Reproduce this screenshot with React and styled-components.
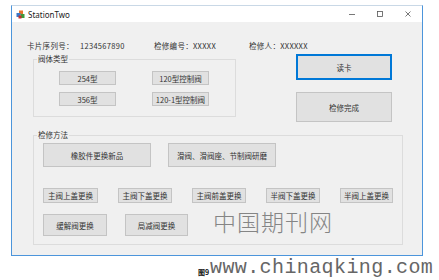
import styled, { createGlobalStyle } from "styled-components";

const Global = createGlobalStyle`
  html, body {
    margin: 0;
    padding: 0;
    background: #ffffff;
  }
  body {
    font-family: "Noto Sans CJK SC", "Noto Sans", sans-serif;
    width: 439px;
    height: 280px;
    position: relative;
    overflow: hidden;
  }
`;

const Window = styled.div`
  position: relative;
  margin: 5px 0 0 11px;
  width: 412px;
  height: 251px;
  box-sizing: border-box;
  border: 1px solid #4c95db;
  border-top-color: #c9d8e6;
  background: #f0f0f0;
  display: flex;
  flex-direction: column;
`;

const TitleBar = styled.div`
  height: 16px;
  background: #ffffff;
  display: flex;
  align-items: center;
  padding-left: 4px;
  font-family: "Noto Sans", "Open Sans", sans-serif;
  font-size: 8px;
  color: #222;
`;

const TitleText = styled.span`
  margin-left: 3px;
  flex: 1;
`;

const Controls = styled.div`
  display: flex;
  align-items: center;
  height: 100%;
`;

const Ctrl = styled.div`
  width: 28px;
  height: 100%;
  display: flex;
  align-items: center;
  justify-content: center;
`;

const Client = styled.div`
  flex: 1;
  display: flex;
  flex-direction: column;
  padding-left: 21px;
  font-size: 7.5px;
  color: #333;
`;

const InfoRow = styled.div`
  display: flex;
  align-items: center;
  height: 14px;
  margin: 16px 0 0 -6px;
  white-space: nowrap;
`;

const Info = styled.span`
  width: ${(p) => p.w}px;
  flex: none;
  letter-spacing: 0.3px;
`;

const Middle = styled.div`
  display: flex;
  margin-top: 2px;
`;

const Group = styled.fieldset`
  box-sizing: border-box;
  margin: 0;
  min-width: 0;
  width: ${(p) => p.w}px;
  height: ${(p) => p.h}px;
  border: 1px solid #dcdcdc;
  padding: 0;
  display: flex;
  flex-direction: column;
`;

const Legend = styled.legend`
  font-size: 7.5px;
  line-height: 10px;
  padding: 0 1px;
  margin-left: 3px;
  color: #333;
`;

const TypeGrid = styled.div`
  display: grid;
  grid-template-columns: 57px 57px;
  column-gap: 36px;
  row-gap: 7px;
  padding: 7px 0 0 25px;
`;

const Btn = styled.div`
  box-sizing: border-box;
  width: ${(p) => p.w}px;
  height: ${(p) => p.h}px;
  background: #e1e1e1;
  border: 1px solid ${(p) => (p.focus ? "#0078d7" : "#c4c4c4")};
  box-shadow: ${(p) => (p.focus ? "inset 0 0 0 1px #0078d7" : "none")};
  display: flex;
  align-items: center;
  justify-content: center;
  font-size: 7.5px;
  color: #333;
  white-space: nowrap;
  flex: none;
`;

const SideCol = styled.div`
  display: flex;
  flex-direction: column;
  gap: 12px;
  margin-left: 60px;
`;

const MethodGroup = styled(Group)`
  margin-top: 8px;
`;

const Row = styled.div`
  display: flex;
  gap: ${(p) => p.gap}px;
  padding-left: 9px;
  margin-top: ${(p) => p.mt}px;
`;

const Watermark = styled.div`
  position: absolute;
  left: 213px;
  top: 207px;
  font-family: "Noto Sans CJK SC", sans-serif;
  font-weight: 300;
  font-size: 23px;
  letter-spacing: 1px;
  color: #858585;
  line-height: 28px;
`;

const Url = styled.div`
  position: absolute;
  left: 210px;
  top: 257px;
  font-family: "Liberation Mono", monospace;
  font-size: 20px;
  letter-spacing: 0.4px;
  line-height: 22px;
  color: #666;
`;

const Caption = styled.div`
  position: absolute;
  left: 198px;
  top: 268px;
  font-size: 7px;
  font-weight: bold;
  line-height: 9px;
  color: #111;
`;

function AppIcon() {
  return (
    <svg width="9" height="9" viewBox="0 0 9 9">
      <rect x="3" y="0.5" width="4" height="4" fill="#e8732c" />
      <rect x="0.5" y="3" width="4" height="4" fill="#3a78c9" />
      <rect x="4.5" y="4" width="4" height="4" fill="#3e9a3b" />
      <rect x="2.5" y="5.5" width="3" height="3" fill="#c8302c" />
    </svg>
  );
}

export default function App() {
  return (
    <>
      <Global />
      <Window>
        <TitleBar>
          <AppIcon />
          <TitleText>StationTwo</TitleText>
          <Controls>
            <Ctrl>
              <svg width="8" height="8" viewBox="0 0 8 8">
                <line x1="1" y1="4.5" x2="7" y2="4.5" stroke="#555" strokeWidth="0.8" />
              </svg>
            </Ctrl>
            <Ctrl>
              <svg width="8" height="8" viewBox="0 0 8 8">
                <rect x="1.5" y="1.5" width="5" height="5" fill="none" stroke="#555" strokeWidth="0.8" />
              </svg>
            </Ctrl>
            <Ctrl>
              <svg width="8" height="8" viewBox="0 0 8 8">
                <path d="M1.5 1.5 L6.5 6.5 M6.5 1.5 L1.5 6.5" stroke="#555" strokeWidth="0.8" />
              </svg>
            </Ctrl>
          </Controls>
        </TitleBar>
        <Client>
          <InfoRow>
            <Info w={53}>卡片序列号：</Info>
            <Info w={74}>1234567890</Info>
            <Info w={95}>检修编号：XXXXX</Info>
            <Info w={60}>检修人：XXXXXX</Info>
          </InfoRow>
          <Middle>
            <Group w={203} h={63}>
              <Legend>阀体类型</Legend>
              <TypeGrid>
                <Btn w={57} h={14}>254型</Btn>
                <Btn w={57} h={14}>120型控制阀</Btn>
                <Btn w={57} h={14}>356型</Btn>
                <Btn w={57} h={14}>120-1型控制阀</Btn>
              </TypeGrid>
            </Group>
            <SideCol>
              <Btn w={96} h={26} focus>读卡</Btn>
              <Btn w={96} h={30}>检修完成</Btn>
            </SideCol>
          </Middle>
          <MethodGroup w={370} h={115}>
            <Legend>检修方法</Legend>
            <Row gap={17} mt={3}>
              <Btn w={108} h={24}>橡胶件更换新品</Btn>
              <Btn w={108} h={24}>滑阀、滑阀座、节制阀研磨</Btn>
            </Row>
            <Row gap={20} mt={21}>
              <Btn w={55} h={15}>主阀上盖更换</Btn>
              <Btn w={54} h={15}>主阀下盖更换</Btn>
              <Btn w={54} h={15}>主阀前盖更换</Btn>
              <Btn w={54} h={15}>半阀下盖更换</Btn>
              <Btn w={53} h={15}>半阀上盖更换</Btn>
            </Row>
            <Row gap={18} mt={11}>
              <Btn w={64} h={22}>缓解阀更换</Btn>
              <Btn w={63} h={22}>局减阀更换</Btn>
            </Row>
          </MethodGroup>
        </Client>
      </Window>
      <Watermark>中国期刊网</Watermark>
      <Url>www.chinaqking.com</Url>
      <Caption>图9</Caption>
    </>
  );
}
